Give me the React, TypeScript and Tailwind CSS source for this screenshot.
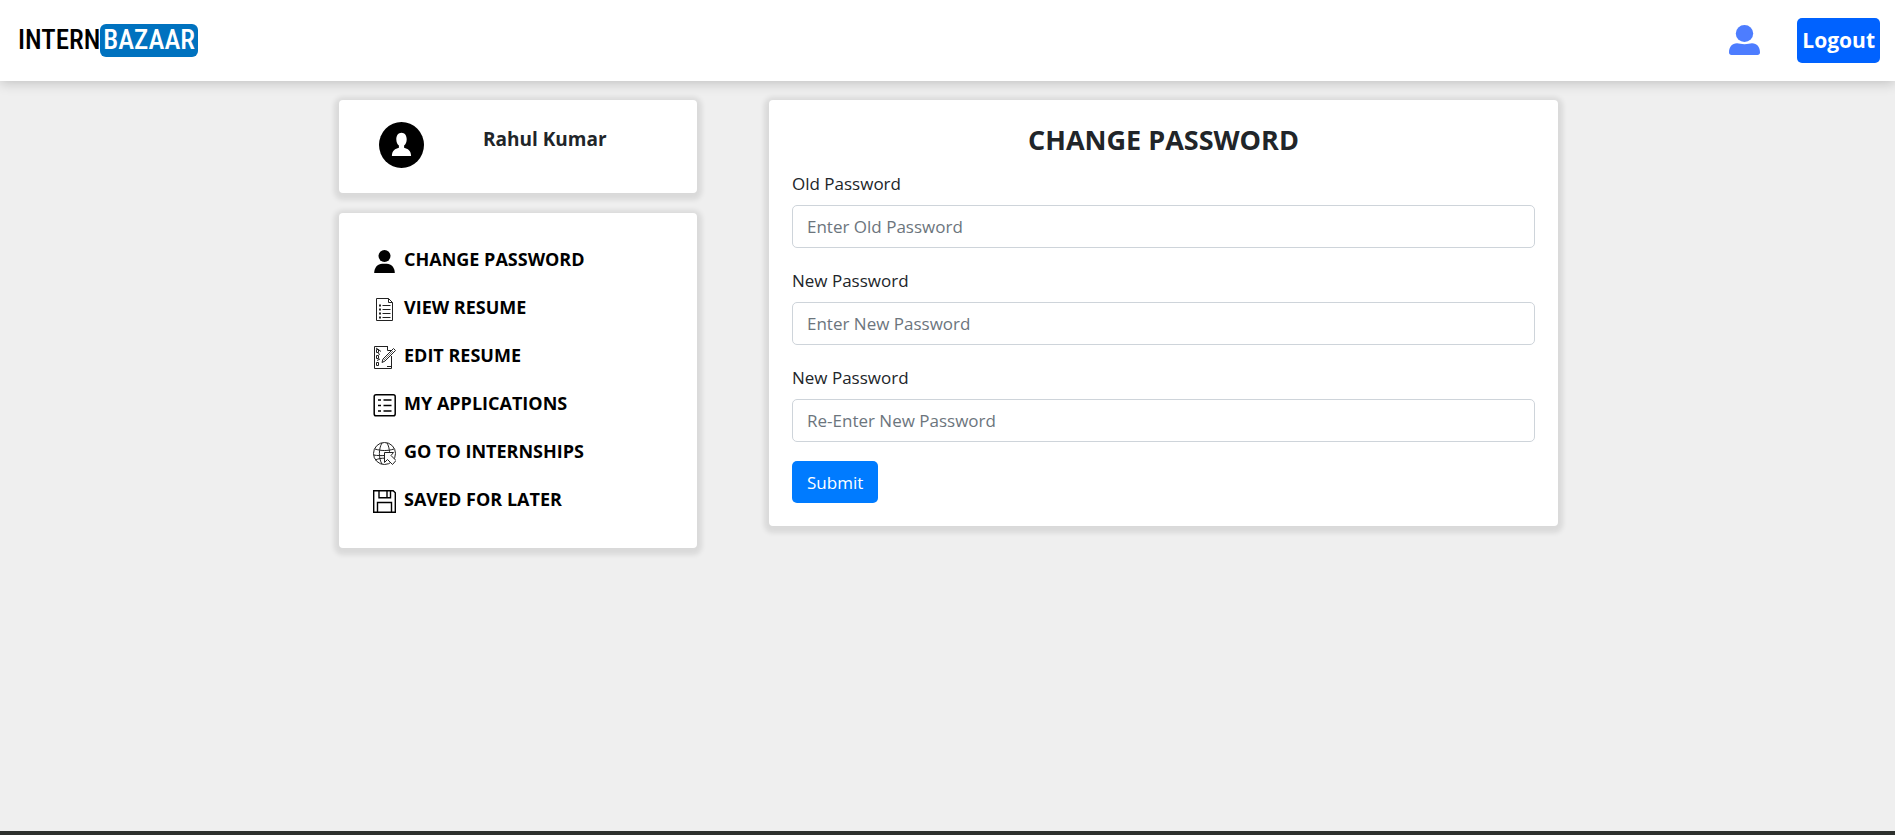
import React from "react";

type IconProps = { className?: string };

function UserBadgeIcon({ className }: IconProps) {
  return (
    <svg viewBox="0 0 32 30" className={className} fill="currentColor" aria-hidden="true">
      <ellipse cx="15.5" cy="8.5" rx="8.7" ry="8.5" />
      <path d="M0 27.5C0 22 3 18.2 8 18.2c2.500 0 4 1 7.500 1s5-1 7.500-1c5 0 8 3.800 8 9.300 0 1.500-1 2.500-2.500 2.500h-26C1 30 0 29 0 27.500Z" />
    </svg>
  );
}

function AvatarIcon({ className }: IconProps) {
  return (
    <svg viewBox="0 0 45 46" className={className} aria-hidden="true">
      <ellipse cx="22.500" cy="23" rx="22.500" ry="23" fill="#000" />
      <path
        d="M22.500 10.800c3.200 0 5.200 2.800 5.200 6.500 0 2.600-1 5-2.600 6.300v2.200c3.600.9 7 3 7 8.200H12.900c0-5.200 3.400-7.300 7-8.200v-2.200c-1.600-1.300-2.600-3.700-2.600-6.300 0-3.700 2-6.500 5.200-6.500Z"
        fill="#fff"
      />
    </svg>
  );
}

function PersonIcon({ className }: IconProps) {
  return (
    <svg viewBox="0 0 23 23" className={className} fill="#000" aria-hidden="true">
      <circle cx="11.500" cy="6" r="6" />
      <path d="M1.200 23c0-5.500 3.500-9.300 8-9.300h4.600c4.500 0 8 3.800 8 9.300Z" />
    </svg>
  );
}

function ResumeIcon({ className }: IconProps) {
  return (
    <svg viewBox="0 0 23 23" className={className} fill="none" stroke="#222" aria-hidden="true">
      <path d="M3.500.5h12l4 4v18h-16ZM15.500.5v4h4" />
      <path d="M9.500 7.500h8M9.500 11.500h8M9.500 15.500h8M9.500 19.500h8" />
      <path d="M6 7.500h2M6 11.500h2M6 15.500h2M6 19.500h2" strokeWidth="2" />
    </svg>
  );
}

function EditResumeIcon({ className }: IconProps) {
  return (
    <svg viewBox="0 0 23 23" className={className} fill="none" stroke="#222" aria-hidden="true">
      <path d="M15 .5H1.500v22h17V10M14.500.5v4h4V7" />
      <path d="M3.500 3.500h2v3h-2zM3.500 9.500h2v3h-2zM3.500 16.500h2v3h-2z" />
      <path d="M3 2l3 2 2 1.500M5 7.500l2 1M4 14.500l3-1.500M14 20.500h4" />
      <path d="m9 16.500 1-3.500L20.500 2.500l2 2L12 15Z" fill="#fff" />
      <path d="m11 14 9-9" strokeWidth=".6" />
    </svg>
  );
}

function ApplicationsIcon({ className }: IconProps) {
  return (
    <svg viewBox="0 0 23 23" className={className} fill="none" stroke="#000" aria-hidden="true">
      <rect x="1.200" y=".8" width="21" height="21" rx="1.800" strokeWidth="1.500" />
      <path d="M5 6h3M10.500 6h8M5 11.500h3M10.500 11.500h8M5 17h3M10.500 17h8" strokeWidth="1.300" />
    </svg>
  );
}

function InternshipsIcon({ className }: IconProps) {
  return (
    <svg viewBox="0 0 23 23" className={className} fill="none" stroke="#222" aria-hidden="true">
      <circle cx="11.500" cy="11.500" r="11" />
      <path d="M2 7c6 2 13 2 19 0M.5 13c4 .7 8 .7 11 .5M2.500 18c3-1.500 6-1.800 9-1.800M9 .8C5.500 7 5.500 16 9 22.300M14 .8c1.500 2.700 2.300 6 2.500 9" />
      <path d="M11.500 10.500h9l-2.500 3 5 5-3.500 4-5-5-3 3Z" fill="#fff" />
    </svg>
  );
}

function SaveIcon({ className }: IconProps) {
  return (
    <svg viewBox="0 0 23 23" className={className} fill="none" stroke="#000" strokeWidth="1.400" aria-hidden="true">
      <path d="M.7.700h19.500l2.100 2.100v19.500H.700ZM6 .7v7h11.500v-7M4.500 22V12.500h14V22M14 1v6" />
    </svg>
  );
}

const menu = [
  { label: "CHANGE PASSWORD", Icon: PersonIcon },
  { label: "VIEW RESUME", Icon: ResumeIcon },
  { label: "EDIT RESUME", Icon: EditResumeIcon },
  { label: "MY APPLICATIONS", Icon: ApplicationsIcon },
  { label: "GO TO INTERNSHIPS", Icon: InternshipsIcon },
  { label: "SAVED FOR LATER", Icon: SaveIcon },
];

const fields = [
  { id: "old-password", label: "Old Password", placeholder: "Enter Old Password" },
  { id: "new-password", label: "New Password", placeholder: "Enter New Password" },
  { id: "confirm-password", label: "New Password", placeholder: "Re-Enter New Password" },
];

function Card({ className, children }: { className: string; children: React.ReactNode }) {
  return (
    <section className={`rounded bg-white shadow-[0_2px_5px_5px_rgba(0,0,0,0.09)] ${className}`}>{children}</section>
  );
}

export default function App() {
  return (
    <div className="flex min-h-screen flex-col bg-[#efefef] font-['Open_Sans','Noto_Sans',sans-serif] text-[17px] leading-[27px] text-[#212529]">
      <header className="flex h-[81px] items-center justify-between bg-white pr-[15px] pb-px pl-[18px] shadow-[0_2px_12px_rgba(0,0,0,0.2)]">
        <a
          href="#"
          className="flex items-center font-['Roboto_Condensed','Roboto',sans-serif] text-[27px] leading-[33px] font-medium text-black"
        >
          <span>INTERN</span>
          <span className="rounded-md bg-[#0072bf] px-[3px] text-white">BAZAAR</span>
        </a>
        <div className="flex items-center gap-9">
          <a href="#" aria-label="Profile">
            <UserBadgeIcon className="h-[30px] w-8 text-[#4d7dff]" />
          </a>
          <button type="button" className="h-[45px] rounded-[5px] bg-[#0062ff] px-[5px] text-[21px] font-bold text-white">
            Logout
          </button>
        </div>
      </header>

      <main className="mx-auto flex w-full max-w-[1221px] flex-1 items-start gap-[72px] pt-[19px] pl-[2px]">
        <aside className="flex w-[358px] shrink-0 flex-col gap-5">
          <Card className="flex gap-[59px] px-10 pt-[22px] pb-[25px]">
            <AvatarIcon className="h-[46px] w-[45px]" />
            <h2 className="pt-1 text-[19px] font-bold">Rahul Kumar</h2>
          </Card>
          <Card className="px-[34px] pt-[22px] pb-[25px]">
            <nav>
              <ul>
                {menu.map(({ label, Icon }) => (
                  <li key={label}>
                    <a href="#" className="flex h-12 items-center gap-2 text-[18px] font-bold text-black">
                      <Icon className="mt-1 size-[23px]" />
                      {label}
                    </a>
                  </li>
                ))}
              </ul>
            </nav>
          </Card>
        </aside>

        <Card className="min-w-0 flex-1 p-[23px]">
          <h1 className="mb-[13px] text-center text-[27px] leading-[34px] font-bold">CHANGE PASSWORD</h1>
          <form>
            {fields.map(({ id, label, placeholder }) => (
              <div key={id} className="mb-[19px]">
                <label htmlFor={id} className="mb-2 block">
                  {label}
                </label>
                <input
                  id={id}
                  type="password"
                  placeholder={placeholder}
                  className="block h-[43px] w-full rounded-[5px] border border-[#ced4da] bg-white px-[14px] placeholder:text-[#6c757d] placeholder:opacity-100"
                />
              </div>
            ))}
            <button type="button" className="h-[42px] rounded-[5px] bg-[#007bff] px-[15px] text-white">
              Submit
            </button>
          </form>
        </Card>
      </main>
      <footer className="h-1 bg-[#2d302d]" />
    </div>
  );
}
